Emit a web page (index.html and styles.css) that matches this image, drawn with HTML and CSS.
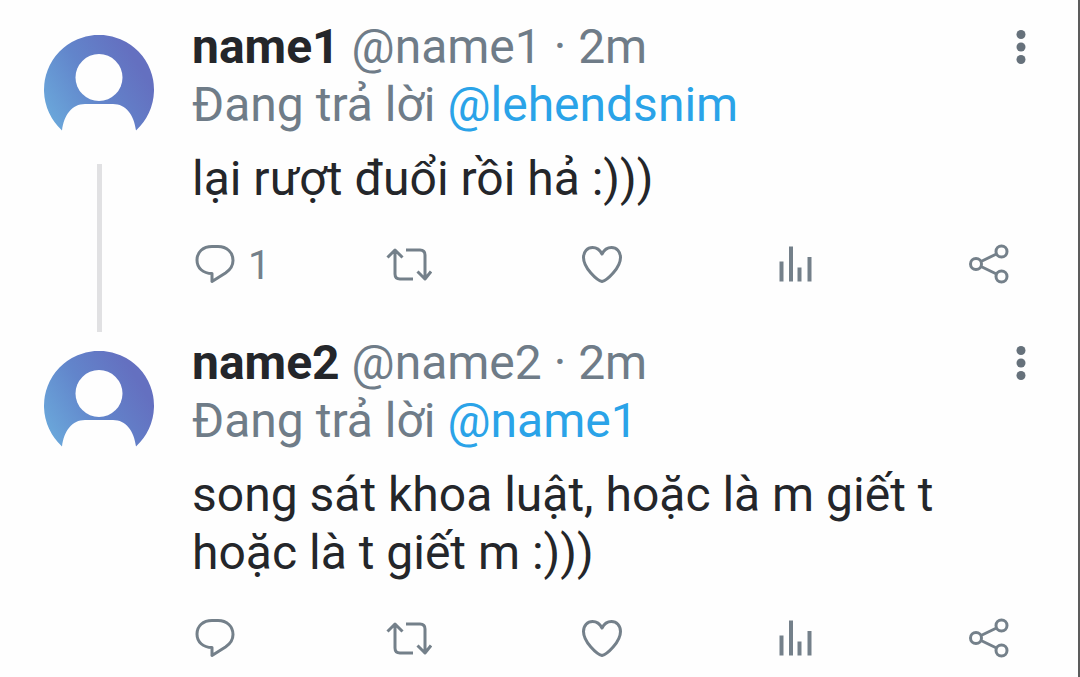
FILE: index.html
```html
<!DOCTYPE html>
<html lang="vi">
<head>
<meta charset="utf-8">
<meta name="viewport" content="width=device-width, initial-scale=1">
<title>Thread</title>
<link rel="stylesheet" href="styles.css">
</head>
<body>
<svg class="defs" width="0" height="0" aria-hidden="true">
  <defs>
    <linearGradient id="avatar-fill" x1="0" y1="0.75" x2="0.85" y2="0.3">
      <stop offset="0" stop-color="#6aa6da"/>
      <stop offset="0.5" stop-color="#6285cb"/>
      <stop offset="1" stop-color="#6470c0"/>
    </linearGradient>
    <symbol id="avatar" viewBox="0 0 110 110">
      <path fill="url(#avatar-fill)" d="M18 95.500A55 55 0 1 1 92 95.500C90 80 82 69 69 69H41C28 69 20 80 18 95.500Z"/>
      <circle cx="55" cy="42.500" r="23.500" fill="#fefefe"/>
    </symbol>
    <symbol id="reply" viewBox="0 0 46 40">
      <path d="M20 2.500H26C35 2.500 41 8.500 41 16.500C41 22 38 26 33.500 29L20 37.500V29.500C11 29.500 5 24 5 16C5 8 11 2.500 20 2.500Z"/>
    </symbol>
    <symbol id="retweet" viewBox="0 0 46 40">
      <path d="M1.500 13.500L9 6L16.500 13.500M9 6.500V30Q9 35 14 35H27M20 6H34Q39 6 39 11V34.500M31.500 27.500L39 35L45 27.500"/>
    </symbol>
    <symbol id="like" viewBox="0 0 46 40">
      <path d="M23 37.500C18 36.500 4.500 24 4.500 13.500C4.500 7.500 8.500 3.500 13.500 3.500C18 3.500 21 6 23 10C25 6 28 3.500 32.500 3.500C37.500 3.500 41.500 7.500 41.500 13.500C41.500 24 28 36.500 23 37.500Z"/>
    </symbol>
    <symbol id="stats" viewBox="0 0 46 40">
      <path class="bars" d="M8.500 17.500V37.500M18 2.500V37.500M26.500 23.500V37.500M36.500 13V37.500"/>
    </symbol>
    <symbol id="share" viewBox="0 0 46 40">
      <circle cx="10" cy="20" r="5.500"/>
      <circle cx="35.500" cy="7.500" r="5.500"/>
      <circle cx="35.500" cy="32.500" r="5.500"/>
      <path d="M15 17.500L30.500 10M15 22.500L30.500 30"/>
    </symbol>
    <symbol id="more" viewBox="0 0 20 40">
      <circle cx="10" cy="7.500" r="4.500"/>
      <circle cx="10" cy="20" r="4.500"/>
      <circle cx="10" cy="32.500" r="4.500"/>
    </symbol>
  </defs>
</svg>
<main class="thread">
  <article class="post">
    <div class="rail">
      <svg class="avatar" role="img" aria-label="name1"><use href="#avatar"/></svg>
      <div class="connector"></div>
    </div>
    <div class="content">
      <header class="head">
        <div class="byline"><strong class="name">name1</strong> @name1 · 2m</div>
        <button class="more" type="button" aria-label="More"><svg><use href="#more"/></svg></button>
      </header>
      <div class="context">Đang trả lời <a href="#lehendsnim">@lehendsnim</a></div>
      <p class="text">lại rượt đuổi rồi hả :)))</p>
      <div class="actions">
        <button class="action" type="button" aria-label="Reply"><svg><use href="#reply"/></svg><span class="count">1</span></button>
        <button class="action" type="button" aria-label="Retweet"><svg><use href="#retweet"/></svg></button>
        <button class="action" type="button" aria-label="Like"><svg><use href="#like"/></svg></button>
        <button class="action" type="button" aria-label="Statistics"><svg><use href="#stats"/></svg></button>
        <button class="action" type="button" aria-label="Share"><svg><use href="#share"/></svg></button>
      </div>
    </div>
  </article>
  <article class="post">
    <div class="rail">
      <svg class="avatar" role="img" aria-label="name2"><use href="#avatar"/></svg>
    </div>
    <div class="content">
      <header class="head">
        <div class="byline"><strong class="name">name2</strong> @name2 · 2m</div>
        <button class="more" type="button" aria-label="More"><svg><use href="#more"/></svg></button>
      </header>
      <div class="context">Đang trả lời <a href="#name1">@name1</a></div>
      <p class="text">song sát khoa luật, hoặc là m giết t hoặc là t giết m :)))</p>
      <div class="actions">
        <button class="action" type="button" aria-label="Reply"><svg><use href="#reply"/></svg></button>
        <button class="action" type="button" aria-label="Retweet"><svg><use href="#retweet"/></svg></button>
        <button class="action" type="button" aria-label="Like"><svg><use href="#like"/></svg></button>
        <button class="action" type="button" aria-label="Statistics"><svg><use href="#stats"/></svg></button>
        <button class="action" type="button" aria-label="Share"><svg><use href="#share"/></svg></button>
      </div>
    </div>
  </article>
</main>
</body>
</html>
```
FILE: styles.css
```css
* {
  box-sizing: border-box;
}

body {
  margin: 0;
  background: #fefefe;
  color: #24262a;
  font: 48px/58px Roboto, "Noto Sans", sans-serif;
}

.defs {
  position: absolute;
}

.thread {
  min-height: 100vh;
  padding: 16px 47px 0 44px;
  border-right: 2px solid #5c5c5c;
}

.post {
  display: flex;
  gap: 38px;
}

.rail {
  display: flex;
  flex: none;
  flex-direction: column;
  align-items: center;
  gap: 19px;
  padding-top: 19px;
}

.avatar {
  width: 110px;
  height: 110px;
}

.connector {
  flex: 1;
  width: 5px;
  background: #e1e1e3;
}

.content {
  flex: 1;
  min-width: 0;
  padding: 2px 0 48px;
}

.post:last-child .content {
  padding-bottom: 0;
}

.head {
  display: flex;
  justify-content: space-between;
  align-items: center;
}

.byline,
.context {
  color: #6f7c88;
}

.name {
  color: #24262a;
  font-weight: 700;
}

.context a {
  color: #2aa3e8;
  text-decoration: none;
}

.text {
  margin: 16px 0 0;
}

button {
  padding: 0;
  border: 0;
  background: none;
  color: #74808a;
  font: inherit;
  cursor: pointer;
}

.more svg {
  display: block;
  width: 20px;
  height: 40px;
  fill: #66717b;
}

.actions {
  display: grid;
  grid-template-columns: repeat(4, 1fr) 46px;
  margin: 36px 19px 0 0;
}

.action {
  display: flex;
  align-items: center;
  gap: 10px;
  height: 40px;
}

.action svg {
  flex: none;
  width: 46px;
  height: 40px;
  fill: none;
  stroke: #74808a;
  stroke-width: 3;
  stroke-linejoin: round;
}

.bars {
  stroke-width: 4;
}

.count {
  padding-top: 4px;
  font-size: 40px;
}
```
